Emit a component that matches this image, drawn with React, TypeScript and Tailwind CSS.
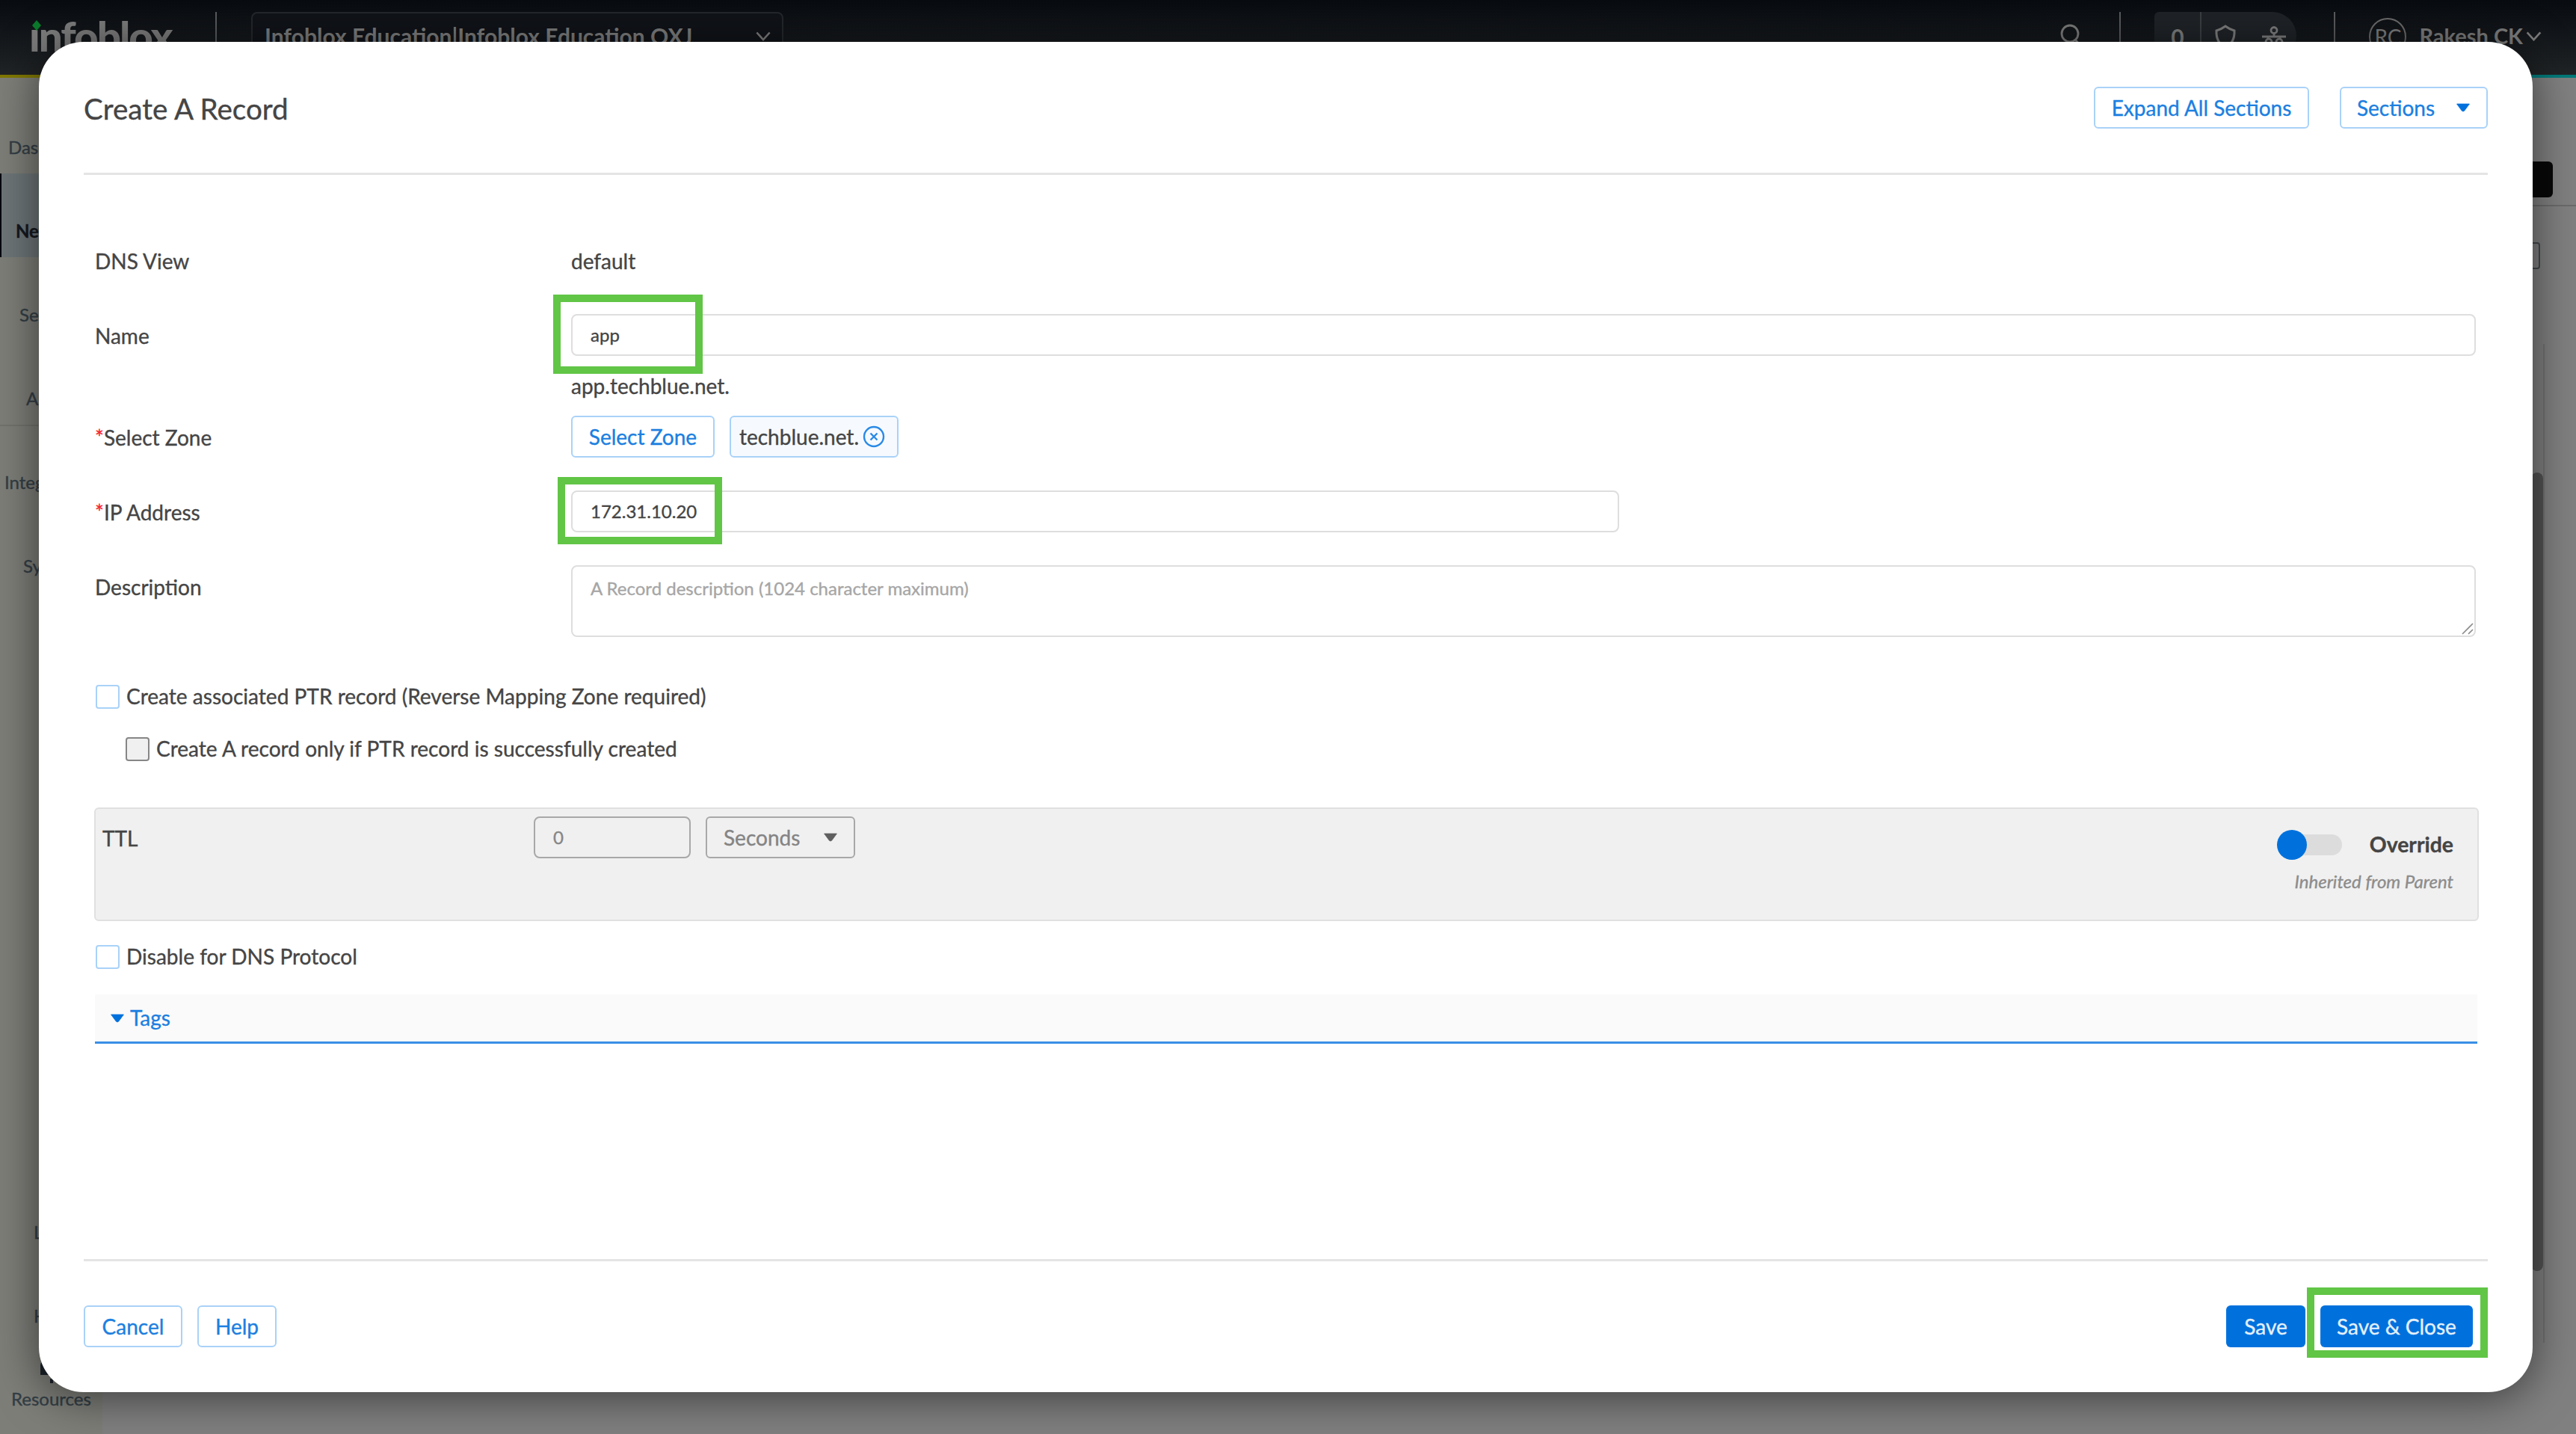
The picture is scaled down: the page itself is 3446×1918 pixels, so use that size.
import React from "react";
import type { ReactNode } from "react";

const navItems = [
  { label: "Dashboards", x: "ml-[11px]", h: "h-[128px]", pt: "pt-[81px]" },
  { label: "Network", x: "ml-[19px]", h: "h-[112px]", pt: "pt-[65px]", active: true },
  { label: "Security", x: "ml-[26px]", h: "h-[112px]", pt: "pt-[65px]" },
  { label: "Assets", x: "ml-[35px]", h: "h-[114px]", pt: "pt-[65px]", rule: true },
  { label: "Integrations", x: "ml-[6px]", h: "h-[112px]", pt: "pt-[63px]" },
  { label: "System", x: "ml-[31px]", h: "h-[949px]", pt: "pt-[63px]" },
  { label: "Logs", x: "ml-[45px]", h: "h-[112px]", pt: "pt-[5px]" },
  { label: "Help", x: "ml-[45px]", h: "h-[62px]", pt: "pt-[5px]" },
];

function Triangle({ className }: { className: string }) {
  return (
    <svg viewBox="0 0 20 12" className={className}>
      <path d="M1.6 1h16.800L11.800 10q-1.800 2-3.600 0z" fill="currentColor" stroke="currentColor" strokeWidth="0.8" strokeLinejoin="round" />
    </svg>
  );
}

function Chevron({ className }: { className: string }) {
  return (
    <svg viewBox="0 0 22 14" className={className} fill="none" stroke="currentColor" strokeWidth="2.8">
      <path d="M1.5 1.5 11 12 20.5 1.5" />
    </svg>
  );
}

function OutlineButton({ className, children }: { className: string; children: ReactNode }) {
  return (
    <button
      className={`flex h-[56px] items-center justify-center rounded-[6px] border-2 border-[#a9d2f8] bg-white pb-px text-[28px] text-[#1c7fe0] ${className}`}
    >
      {children}
    </button>
  );
}

function Highlight({ className }: { className: string }) {
  return <div className={`pointer-events-none absolute border-[10px] border-[#61c546] ${className}`} />;
}

function Label({ required, children }: { required?: boolean; children: ReactNode }) {
  return (
    <div className="whitespace-nowrap">
      {required && <span className="text-[#f5222d]">*</span>}
      {children}
    </div>
  );
}

function CheckRow({ className, box, children }: { className: string; box: string; children: ReactNode }) {
  return (
    <div className={`flex items-center gap-[9px] whitespace-nowrap pl-[1px] text-[28.050px] ${className}`}>
      <div className={`h-[32px] w-[32px] rounded-[4px] border-2 ${box}`} />
      <span className="pb-px">{children}</span>
    </div>
  );
}

function TopBar() {
  return (
    <header className="flex h-[104px] items-start border-b-4 border-[#007a7a] bg-linear-to-b from-[#080b10] to-[#212426] text-[#7c7c7c]">
      <div className="relative ml-[39px] mt-[15px] h-[66px] w-[193px]">
        <div className="origin-left scale-x-[1.01] text-[56px] leading-[66px] font-black tracking-[-2px]">ınfoblox</div>
        <svg viewBox="0 0 14 14" className="absolute left-[3px] top-[12px] h-[14px] w-[14px]">
          <path d="M7 0 13 7 7 14 1 7z" fill="#0b7a2c" />
        </svg>
      </div>
      <div className="ml-[56px] mt-[16px] h-[64px] w-[2px] bg-[#5a5b5d]" />
      <div className="ml-[46px] mt-[16px] flex h-[68px] w-[712px] items-center justify-between rounded-[8px] border-2 border-[#24282c] bg-[#101318] pl-[16px] pr-[15px] pb-[4px] text-[30px] font-bold">
        <span className="whitespace-nowrap">Infoblox Education|Infoblox Education QXJ</span>
        <Chevron className="h-[13px] w-[20px]" />
      </div>
      <div className="ml-auto flex items-start">
        <svg viewBox="0 0 32 32" className="mt-[32px] h-[32px] w-[32px]" fill="none" stroke="currentColor" strokeWidth="2.8">
          <circle cx="14" cy="13" r="11" />
          <path d="m21 21 8 9" />
        </svg>
        <div className="ml-[48px] mt-[16px] h-[64px] w-[2px] bg-[#5a5b5d]" />
        <div className="ml-[45px] mt-[16px] flex h-[64px] w-[190px] rounded-r-[32px] rounded-l-[6px] bg-[#1f2327]">
          <div className="w-[63px] border-r-2 border-[#3b3f42] pt-[15px] text-center text-[30px] leading-[36px] font-bold">0</div>
          <svg viewBox="0 0 30 34" className="ml-[17px] mt-[17px] h-[34px] w-[30px]" fill="none" stroke="currentColor" strokeWidth="3">
            <path d="M15 2c4 3 8 5 12 6 .5 10-3 18-12 23C6 26 2.500 18 3 8c4-1 8-3 12-6z" />
          </svg>
          <svg viewBox="0 0 34 34" className="ml-[33px] mt-[19px] h-[34px] w-[34px]" fill="none" stroke="currentColor" strokeWidth="2.8">
            <circle cx="17" cy="5.500" r="4" />
            <path d="M17 9.500V13M1 14h32M9 14v3M25 14v3" />
            <circle cx="10" cy="21" r="4" />
            <circle cx="24" cy="21" r="4" />
          </svg>
        </div>
        <div className="ml-[50px] mt-[16px] h-[64px] w-[2px] bg-[#5a5b5d]" />
        <div className="ml-[45px] mt-[24px] flex h-[50px] w-[50px] items-center justify-center rounded-full border-2 border-[#6c6c6c] text-[28px]">RC</div>
        <span className="ml-[17px] mt-[28px] text-[29px] leading-[40px] font-bold whitespace-nowrap">Rakesh CK</span>
        <Chevron className="ml-[4px] mr-[46px] mt-[42px] h-[13px] w-[21px]" />
      </div>
    </header>
  );
}

function Backdrop() {
  return (
    <div className="h-[1918px] w-[3446px] bg-[#808080]">
      <TopBar />
      <div className="flex h-[1814px]">
        <nav className="w-[137px] overflow-hidden bg-[#7d7e78] text-[24px] leading-[24px] text-[#343e46] [-webkit-text-stroke:0.4px]">
          {navItems.map((item) => (
            <div
              key={item.label}
              className={`overflow-hidden whitespace-nowrap ${item.h} ${item.pt} ${
                item.active ? "border-l-2 border-[#05070f] bg-[#6d7578] font-bold text-[#14181f]" : ""
              } ${item.rule ? "border-b-2 border-[#73736e]" : ""}`}
            >
              <div className={item.x}>{item.label}</div>
            </div>
          ))}
          <svg viewBox="0 0 32 32" className="ml-[53px] mt-[17px] h-[32px] w-[32px]" fill="#1c242b">
            <path d="M1 4q0-4 4-4h22q4 0 4 4v13H1zM14 22h4v6h-4z" />
          </svg>
          <div className="mt-[5px] ml-[15px]">Resources</div>
        </nav>
        <main className="flex grow flex-col items-end">
          <div className="flex h-[172px] w-full justify-end border-b-2 border-[#6b6b6b] pr-[31px] pt-[112px]">
            <div className="h-[48px] w-[240px] rounded-[6px] bg-[#080808]" />
          </div>
          <div className="mr-[48px] mt-[48px] h-[36px] w-[60px] rounded-[4px] border-2 border-[#45494d]" />
          <div className="mr-[42px] mt-[100px] flex h-[1336px] w-[60px] justify-end border-r-2 border-[#727272] pt-[172px]">
            <div className="h-[1068px] w-[16px] rounded-[8px] bg-[#545454]" />
          </div>
        </main>
      </div>
    </div>
  );
}

function RecordForm() {
  return (
    <div className="h-[1450px] pl-[15px] pr-[16px] pt-[65px]">
      <div className="grid grid-cols-[637px_1fr]">
        <div className="flex h-[100px] items-center"><Label>DNS View</Label></div>
        <div className="flex h-[100px] items-center">default</div>

        <div className="flex h-[100px] items-center"><Label>Name</Label></div>
        <div className="relative flex h-[100px] items-center">
          <div className="-mt-[2px] flex h-[56px] w-full items-center rounded-[8px] border-2 border-[#dedede] pl-[24px] pb-px text-[24px] text-[#444]">app</div>
          <Highlight className="left-[-24px] top-[-5px] h-[106px] w-[200px]" />
        </div>

        <div />
        <div className="h-[35px] leading-[34px]">app.techblue.net.</div>

        <div className="flex h-[100px] items-center pt-[2px]"><Label required>Select Zone</Label></div>
        <div className="flex h-[100px] items-center gap-[20px]">
          <OutlineButton className="w-[192px]">Select Zone</OutlineButton>
          <div className="flex h-[56px] w-[226px] items-center gap-[5px] rounded-[6px] border-2 border-[#a9d2f8] bg-[#f6faff] pl-[11px]">
            <span>techblue.net.</span>
            <svg viewBox="0 0 30 30" className="h-[30px] w-[30px]" fill="none" stroke="#2a8ae6" strokeWidth="2.4">
              <circle cx="15" cy="15" r="13" />
              <path d="m10.500 10.500 9 9m0-9-9 9" />
            </svg>
          </div>
        </div>

        <div className="flex h-[100px] items-center pt-[2px]"><Label required>IP Address</Label></div>
        <div className="relative flex h-[100px] items-center">
          <div className="flex h-[56px] w-[1402px] items-center rounded-[8px] border-2 border-[#dedede] pl-[24px] text-[24px] text-[#444]">172.31.10.20</div>
          <Highlight className="left-[-18px] top-[4px] h-[90px] w-[220px]" />
        </div>

        <div className="flex h-[100px] items-center pt-[2px]"><Label>Description</Label></div>
        <div className="pt-[22px]">
          <div className="relative h-[96px] rounded-[8px] border-2 border-[#dedede] pl-[24px] pt-[14px] text-[24px] leading-[29px] text-[#a6a6a6]">
            A Record description (1024 character maximum)
            <svg viewBox="0 0 16 16" className="absolute right-[1px] bottom-[1px] h-[16px] w-[16px]" stroke="#8a8a8a" strokeWidth="1.6">
              <path d="M1 15 15 1M9 15l6-6" />
            </svg>
          </div>
        </div>
      </div>

      <CheckRow className="mt-[64px] h-[32px]" box="border-[#a9d2f8]">Create associated PTR record (Reverse Mapping Zone required)</CheckRow>
      <CheckRow className="mt-[38px] ml-[40px] h-[32px]" box="border-[#868686] bg-[#f0f0f0]">Create A record only if PTR record is successfully created</CheckRow>

      <div className="mt-[62px] -ml-[1px] -mr-[4px] flex h-[152px] rounded-[6px] border-2 border-[#e0e0e0] bg-[#f0f0f0] pl-[9px] pt-[10px]">
        <div className="w-[577px] pt-[12px] leading-[34px]">TTL</div>
        <div className="flex h-[56px] w-[210px] items-center rounded-[8px] border-2 border-[#a8a8a8] pl-[24px] text-[24px] text-[#868686]">0</div>
        <div className="ml-[20px] flex h-[56px] w-[200px] items-center justify-between rounded-[6px] border-2 border-[#a8a8a8] pl-[22px] pr-[21px] text-[#848484]">
          Seconds
          <Triangle className="h-[12px] w-[20px] text-[#5f5f5f]" />
        </div>
        <div className="ml-auto mr-[32px] flex flex-col items-end">
          <div className="flex h-[56px] items-center pt-[20px]">
            <div className="relative mr-[37px] h-[28px] w-[82px] rounded-full bg-[#dcdcdc]">
              <div className="absolute -left-[5px] -top-[6px] h-[40px] w-[40px] rounded-full bg-[#0071dc]" />
            </div>
            <span className="pb-px text-[28.4px] font-bold">Override</span>
          </div>
          <div className="mt-[16px] text-[24px] leading-[30px] text-[#8c8c8c] italic">Inherited from Parent</div>
        </div>
      </div>

      <CheckRow className="mt-[32px] h-[32px]" box="border-[#a9d2f8]">Disable for DNS Protocol</CheckRow>

      <div className="mt-[34px] -mr-[2px] flex h-[66px] items-center gap-[7px] border-b-[3px] border-[#3a8fe6] bg-[#fafafa] pl-[20px] text-[#1c7fe0]">
        <Triangle className="h-[12px] w-[20px] text-[#0071dc]" />
        <span className="pb-px">Tags</span>
      </div>
    </div>
  );
}

export default function App() {
  return (
    <div className="relative h-[1918px] w-[3446px] overflow-hidden font-['Lato',sans-serif]">
      <Backdrop />
      <div className="absolute left-0 top-[100px] h-[4px] w-[120px] bg-[#807800]" />
      <section
        role="dialog"
        className="absolute left-[52px] top-[56px] flex h-[1806px] w-[3336px] flex-col rounded-[60px] bg-white px-[60px] text-[28px] text-[#454545] shadow-[0_6px_60px_rgba(0,0,0,0.55)] [-webkit-text-stroke:0.35px]"
      >
        <header className="flex h-[178px] items-start border-b-[3px] border-[#e4e4e4]">
          <h1 className="mt-[65px] text-[38.6px] leading-[48px]">Create A Record</h1>
          <OutlineButton className="ml-auto mt-[60px] w-[288px]">Expand All Sections</OutlineButton>
          <OutlineButton className="ml-[41px] mt-[60px] w-[198px] gap-[28px]">
            Sections
            <Triangle className="h-[12px] w-[20px] text-[#0071dc]" />
          </OutlineButton>
        </header>
        <RecordForm />
        <footer className="relative flex grow items-start border-t-[3px] border-[#e4e4e4] pt-[59px]">
          <OutlineButton className="w-[132px]">Cancel</OutlineButton>
          <OutlineButton className="ml-[20px] w-[106px]">Help</OutlineButton>
          <button className="ml-auto h-[56px] w-[106px] rounded-[6px] bg-[#0071dc] text-[#e4f0fc]">Save</button>
          <button className="mr-[20px] ml-[20px] h-[56px] w-[204px] rounded-[6px] bg-[#0071dc] text-[#e4f0fc]">Save &amp; Close</button>
          <Highlight className="right-0 top-[35px] h-[94px] w-[242px]" />
        </footer>
      </section>
    </div>
  );
}
